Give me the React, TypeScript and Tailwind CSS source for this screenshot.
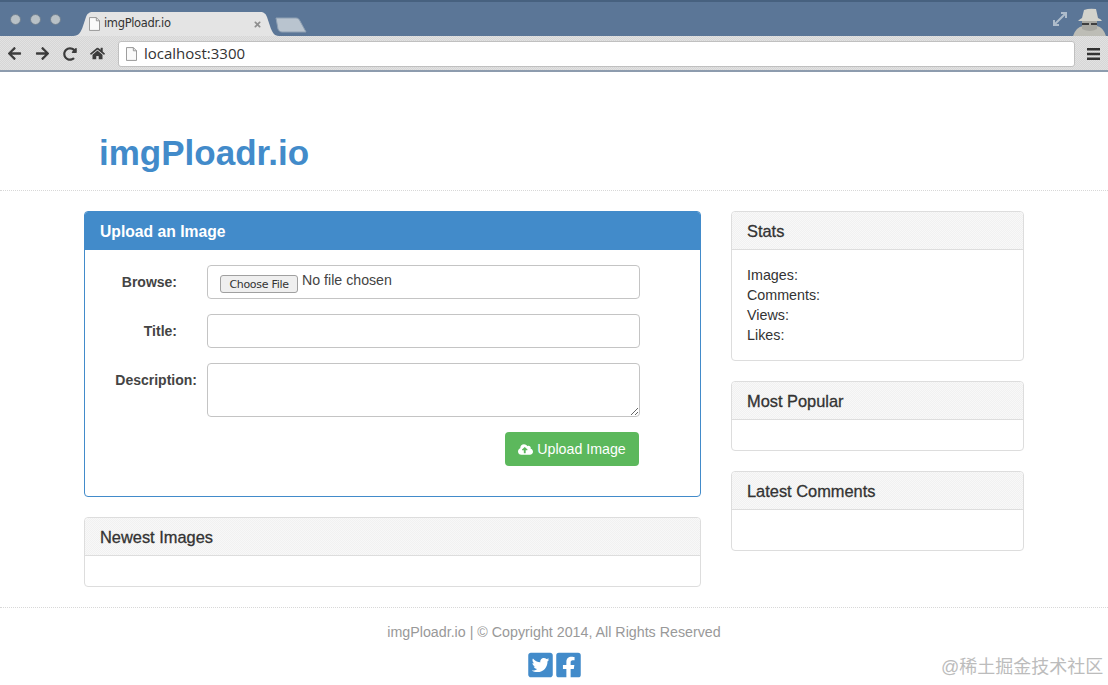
import { FaArrowLeft, FaArrowRight, FaCloudUploadAlt, FaFacebookSquare, FaHome, FaRedoAlt, FaTimes, FaTwitterSquare } from "react-icons/fa";

const FileIcon = ({ className }: { className: string }) => (
    <svg viewBox="0 0 12 15" className={className}>
        <path d="M0.5 0.5H8L11.5 4V14.5H0.5Z" fill="#fafafa" stroke="#8f8f8f" />
        <path d="M8 0.5V4H11.5" fill="none" stroke="#8f8f8f" />
    </svg>
);

const Panel = ({ title, bodyClass, children }: { title: string; bodyClass: string; children?: React.ReactNode }) => (
    <div className="border border-[#dddddd] rounded-[4px] overflow-hidden">
        <div className="h-[38px] bg-[conic-gradient(#f1f1f1_25%,#f8f8f8_0_50%,#f1f1f1_0_75%,#f8f8f8_0)] bg-[length:2px_2px] border-b border-[#dddddd] pl-[15px] pt-[1px] flex items-center text-[16.4px] text-[#333333] [-webkit-text-stroke:0.3px_#333333]">{title}</div>
        <div className={bodyClass}>{children}</div>
    </div>
);

const App = () => {
    return (
        <div className="relative w-[1108px] h-[685px] overflow-hidden bg-white font-['Liberation_Sans',sans-serif] text-[14px] text-[#333333]">
            {/* browser chrome */}
            <div className="h-[36px] bg-[#5b7697] border-t-2 border-[#47617f] flex items-end pl-[10px]">
                <div className="flex gap-[9px] mb-[11px] mr-[12px]">
                    <div className="w-[11px] h-[11px] rounded-full bg-[#b9c1c6] border border-[#6f7f90]"></div>
                    <div className="w-[11px] h-[11px] rounded-full bg-[#b9c1c6] border border-[#6f7f90]"></div>
                    <div className="w-[11px] h-[11px] rounded-full bg-[#b9c1c6] border border-[#6f7f90]"></div>
                </div>
                <div className="relative w-[206px] h-[24px] flex items-center pl-[16px] pr-[17px]">
                    <svg viewBox="0 0 206 24" className="absolute inset-0 w-full h-full">
                        <path d="M0 24C6 24 8 20 10 14L13 5C14 2 16 0 20 0H187C191 0 193 2 194 5L197 14C199 20 201 24 206 24Z" fill="#e4e4e4" />
                    </svg>
                    <FileIcon className="relative w-[11px] h-[14px] mr-[4px]" />
                    <span className="relative text-[11.5px] text-[#333333] font-['DejaVu_Sans',sans-serif] tracking-[-0.35px]">imgPloadr.io</span>
                    <FaTimes className="relative ml-auto text-[#8e8e8e] w-[9px] h-[9px]" />
                </div>
                <svg viewBox="0 0 32 16" className="w-[32px] h-[16px] mb-[3px] -ml-[4px]">
                    <path d="M1 1H21C23 1 24 2 25 4L31 15H7C5 15 4 14 3 12Z" fill="#b9c4cf" stroke="#8fa0b3" />
                </svg>
                <svg viewBox="0 0 16 16" className="ml-auto mb-[9px] mr-[4px] w-[16px] h-[16px]">
                    <path d="M2 14L14 2M9 2H14V7M2 9V14H7" fill="none" stroke="#aebccb" strokeWidth="2" />
                </svg>
                <svg viewBox="0 0 34 28" className="w-[34px] h-[28px] mr-[2px]">
                    <path d="M1 28Q4 19 11 18H25Q31 19 34 28Z" fill="#bdbdb6" />
                    <path d="M10 11H25V21Q18 25 10 21Z" fill="#a8a8a2" />
                    <path d="M10 10L12 2Q17 0 24 1L26 10Q29 11 30 13H6Q8 11 10 10Z" fill="#d3d3cc" />
                    <path d="M10 15H17V17H10ZM19 15H25V17H19Z" fill="#3f3f3f" />
                </svg>
            </div>
            <div className="h-[36px] bg-[conic-gradient(#d6d6d6_25%,#e2e2e2_0_50%,#d6d6d6_0_75%,#e2e2e2_0)] bg-[length:2px_2px] border-b-2 border-[#8d9cae] flex items-center pt-[1px]">
                <div className="w-[118px] flex items-center pl-[7px] gap-[13px] text-[#3c3c3c]">
                    <FaArrowLeft className="w-[15px] h-[15px]" />
                    <FaArrowRight className="w-[15px] h-[15px]" />
                    <FaRedoAlt className="w-[14px] h-[14px]" />
                    <FaHome className="w-[15px] h-[15px]" />
                </div>
                <div className="w-[957px] h-[26px] bg-white border border-[#c0c0c0] rounded-[3px] flex items-center pl-[7px] gap-[7px]">
                    <FileIcon className="w-[11px] h-[14px]" />
                    <span className="text-[15px] text-[#333333] font-['Open_Sans',sans-serif]">localhost:3300</span>
                </div>
                <svg viewBox="0 0 13 12" className="ml-[12px] w-[13px] h-[12px]">
                    <path d="M0 0H13V2.5H0ZM0 4.75H13V7.25H0ZM0 9.5H13V12H0Z" fill="#333333" />
                </svg>
            </div>

            {/* page header */}
            <div className="h-[119px] border-b border-dotted border-[#d8d8d8] pl-[99px] pt-[57px]">
                <h1 className="text-[35px] leading-[48px] font-bold text-[#428bca]">imgPloadr.io</h1>
            </div>

            {/* main columns */}
            <div className="pl-[84px] pt-[20px] flex gap-[30px] h-[417px] border-b border-dotted border-[#d8d8d8]">
                <div className="w-[617px] flex flex-col gap-[20px]">
                    <div className="h-[286px] border border-[#428bca] rounded-[4px] overflow-hidden">
                        <div className="h-[38px] bg-[#428bca] pl-[15px] pt-[1px] flex items-center text-[15.7px] font-bold text-white">Upload an Image</div>
                        <div className="pt-[15px] flex flex-col gap-[15px]">
                            <div className="flex">
                                <label className="w-[112px] pr-[20px] mr-[10px] h-[34px] flex items-center justify-end font-bold text-[#444444]">Browse:</label>
                                <div className="w-[433px] h-[34px] border border-[#c4c4c4] rounded-[4px] flex items-start pl-[12px] pt-[7px] gap-[4px]">
                                    <button className="w-[78px] h-[18px] mt-[2px] bg-[#efefef] border border-[#a0a0a0] rounded-[3px] text-[11px] leading-[18px] text-[#333333] font-['DejaVu_Sans',sans-serif] tracking-[-0.3px]">Choose File</button>
                                    <span className="text-[14.2px] leading-[14px] text-[#444444]">No file chosen</span>
                                </div>
                            </div>
                            <div className="flex">
                                <label className="w-[112px] pr-[20px] mr-[10px] h-[34px] flex items-center justify-end font-bold text-[#444444]">Title:</label>
                                <input className="w-[433px] h-[34px] border border-[#c4c4c4] rounded-[4px]" />
                            </div>
                            <div className="flex">
                                <label className="w-[112px] mr-[10px] h-[34px] flex items-center justify-end font-bold text-[#444444]">Description:</label>
                                <textarea className="w-[433px] h-[54px] border border-[#c4c4c4] rounded-[4px]"></textarea>
                            </div>
                            <div className="w-[554px] flex justify-end">
                                <button className="w-[134px] h-[34px] pt-[1px] bg-[#5cb85c] rounded-[4px] text-white flex items-center justify-center gap-[4px] text-[14.2px]">
                                    <FaCloudUploadAlt className="w-[15px] h-[15px]" />
                                    Upload Image
                                </button>
                            </div>
                        </div>
                    </div>
                    <Panel title="Newest Images" bodyClass="h-[30px]" />
                </div>
                <div className="w-[293px] flex flex-col gap-[20px]">
                    <Panel title="Stats" bodyClass="h-[110px] pl-[15px] pt-[15px] leading-[20px] text-[14.3px]">
                        <div>Images:</div>
                        <div>Comments:</div>
                        <div>Views:</div>
                        <div>Likes:</div>
                    </Panel>
                    <Panel title="Most Popular" bodyClass="h-[30px]" />
                    <Panel title="Latest Comments" bodyClass="h-[40px]" />
                </div>
            </div>

            {/* footer */}
            <div className="flex flex-col items-center pt-[14px]">
                <p className="leading-[20px] text-[14.25px] text-[#999999]">imgPloadr.io | © Copyright 2014, All Rights Reserved</p>
                <div className="flex mt-[9px] text-[#428bca] gap-[1px]">
                    <FaTwitterSquare className="w-[27px] h-[28px]" />
                    <FaFacebookSquare className="w-[27px] h-[28px]" />
                </div>
            </div>

            <span className="absolute left-[941px] top-[656px] text-[18px] leading-[22px] text-[#bcbcbc] font-['Liberation_Sans','Noto_Sans_CJK_SC',sans-serif]">@稀土掘金技术社区</span>
        </div>
    );
};

export default App;
